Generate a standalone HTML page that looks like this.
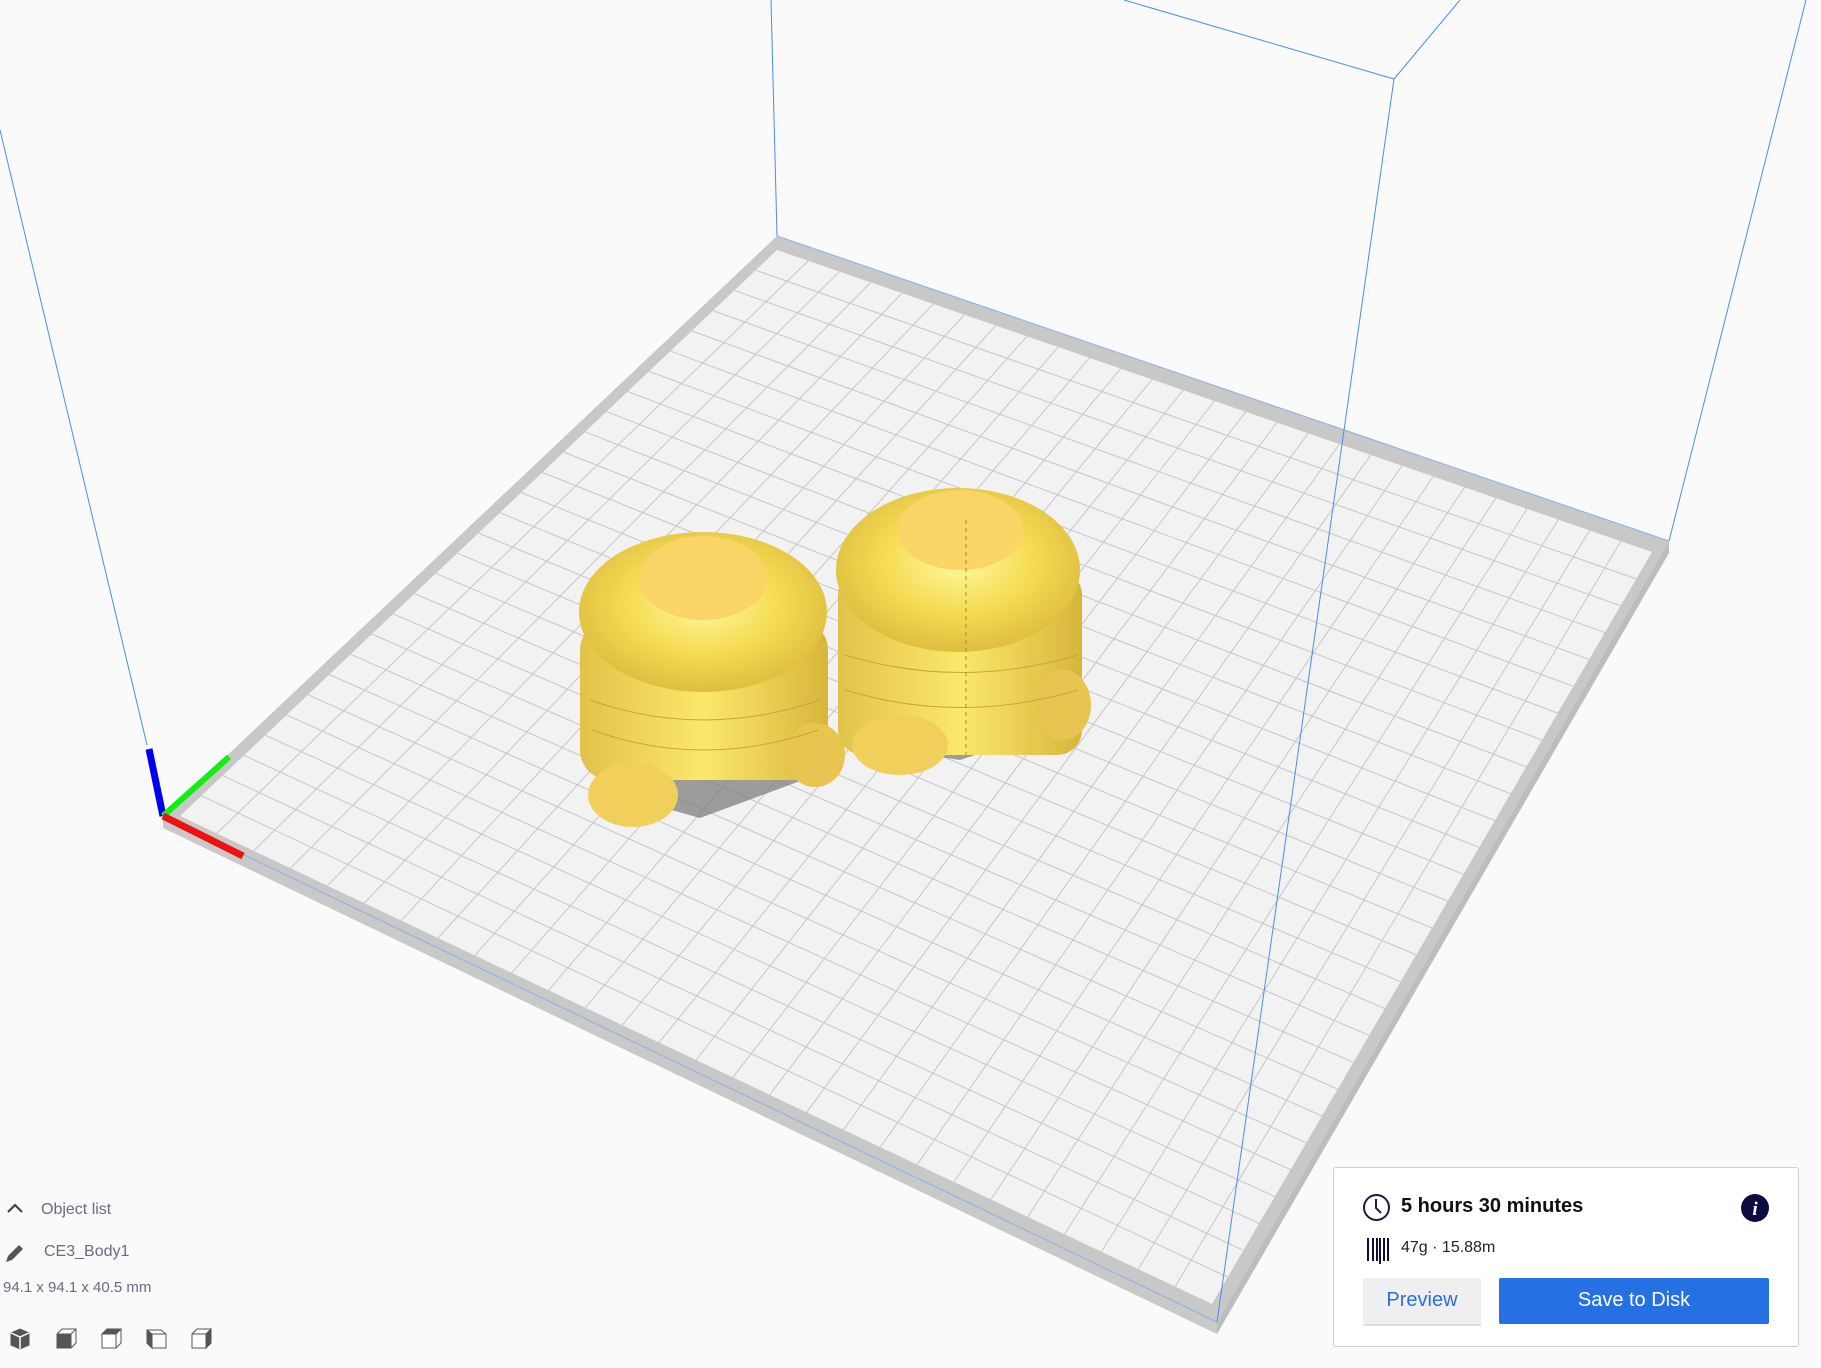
<!DOCTYPE html>
<html><head><meta charset="utf-8"><style>
html,body{margin:0;padding:0;width:1821px;height:1368px;background:#fafafa;overflow:hidden;font-family:"Liberation Sans","DejaVu Sans",sans-serif;}
svg.scene{position:absolute;left:0;top:0}
.panel{position:absolute;left:1333px;top:1167px;width:466px;height:180px;background:#fff;border:1px solid #cfcfcf;border-radius:3px;box-sizing:border-box}
.t{position:absolute;left:67px;top:27px;font-size:20px;font-weight:bold;color:#111}
.m{position:absolute;left:67px;top:71px;font-size:16px;color:#222}
.btn{position:absolute;top:110px;height:46px;line-height:44px;text-align:center;font-size:20px;border-radius:2px}
.lbl{position:absolute;font-size:16px;color:#6b6b80}
</style></head><body>
<svg class="scene" width="1821" height="1368" id="sc">
<g stroke="#4a8cf0" stroke-width="1" fill="none">
<line x1="771" y1="0" x2="777" y2="236"/>
<line x1="0" y1="130" x2="147" y2="745"/>
<line x1="1124" y1="0" x2="1394" y2="79"/>
<line x1="1460" y1="0" x2="1394" y2="79"/>
<line x1="1806" y1="0" x2="1669" y2="541"/>
</g>
<polygon points="163,816 1217,1322 1217,1334 163,828" fill="#c9c9c9"/>
<polygon points="1217,1322 1669,541 1669,553 1217,1334" fill="#bdbdbd"/>
<polygon points="777,236 1669,541 1217,1322 163,816" fill="#c8c8c8"/>
<polygon points="777,250 1652,552 1212,1304 180,816" fill="#f2f2f2" id="inner"/>
<g id="grid" stroke="#c6c6c6" stroke-width="1"></g>
<line x1="777" y1="236" x2="1669" y2="541" stroke="#8ab0ee" stroke-width="1"/>
<line x1="163" y1="816" x2="1217" y2="1322" stroke="#8ab0ee" stroke-width="1"/>
<line x1="1394" y1="79" x2="1217" y2="1322" stroke="#4a8cf0" stroke-width="1"/>
<defs>
<radialGradient id="y1" cx="0.5" cy="0.45" r="0.6"><stop offset="0" stop-color="#fff8a0"/><stop offset="0.5" stop-color="#f6dc55"/><stop offset="1" stop-color="#d9b83a"/></radialGradient>
<linearGradient id="y2" x1="0" x2="1"><stop offset="0" stop-color="#e2c24a"/><stop offset="0.5" stop-color="#fbe86a"/><stop offset="1" stop-color="#d8b53a"/></linearGradient>
</defs>
<polygon points="600,790 700,818 830,770 780,740" fill="#777" opacity="0.7"/>
<polygon points="860,745 960,760 1080,720 1000,700" fill="#777" opacity="0.7"/>
<g>
<rect x="580" y="620" width="248" height="160" rx="30" fill="url(#y2)"/>
<ellipse cx="703" cy="612" rx="124" ry="80" fill="url(#y1)"/>
<ellipse cx="703" cy="578" rx="64" ry="42" fill="#fad466"/>
<ellipse cx="633" cy="795" rx="45" ry="32" fill="#f0cf5a"/>
<ellipse cx="815" cy="755" rx="30" ry="32" fill="#e8c450"/>
<path d="M590 700 Q703 740 820 700 M592 730 Q703 770 818 730" stroke="#c9a538" fill="none"/>
</g>
<g>
<rect x="838" y="570" width="244" height="185" rx="25" fill="url(#y2)"/>
<ellipse cx="958" cy="570" rx="122" ry="82" fill="url(#y1)"/>
<ellipse cx="960" cy="530" rx="63" ry="40" fill="#fad466"/>
<ellipse cx="900" cy="745" rx="48" ry="30" fill="#f0cf5a"/>
<ellipse cx="1063" cy="705" rx="28" ry="35" fill="#e8c450"/>
<path d="M845 655 Q960 690 1078 655 M845 690 Q960 725 1078 690" stroke="#c9a538" fill="none"/>
<line x1="966" y1="520" x2="966" y2="760" stroke="#a88a30" stroke-dasharray="4 4"/>
</g>
<line x1="149" y1="749" x2="163" y2="816" stroke="#0000ee" stroke-width="7"/>
<line x1="163" y1="816" x2="229" y2="757" stroke="#11ee11" stroke-width="6"/>
<line x1="163" y1="816" x2="243" y2="856" stroke="#ee1111" stroke-width="7"/>
</svg>
<script>
(function(){
var B=[777,250],R=[1652,552],F=[1212,1304],L=[180,816];
var g=document.getElementById('grid'),n=28,s='';
function lp(a,b,t){return [a[0]+(b[0]-a[0])*t,a[1]+(b[1]-a[1])*t];}
for(var i=1;i<n;i++){var t=i/n;
var p=lp(L,B,t),q=lp(F,R,t);s+='<line x1="'+p[0]+'" y1="'+p[1]+'" x2="'+q[0]+'" y2="'+q[1]+'"/>';
p=lp(B,R,t);q=lp(L,F,t);s+='<line x1="'+p[0]+'" y1="'+p[1]+'" x2="'+q[0]+'" y2="'+q[1]+'"/>';}
g.innerHTML=s;})();
</script>
<svg style="position:absolute;left:6px;top:1202px" width="18" height="12"><path d="M2 10 L9 3 L16 10" stroke="#444" stroke-width="2.2" fill="none"/></svg>
<div class="lbl" style="left:41px;top:1201px">Object list</div>
<svg style="position:absolute;left:4px;top:1242px" width="22" height="22"><path d="M2 20 L4 14 L15 3 L19 7 L8 18 Z" fill="#555"/></svg>
<div class="lbl" style="left:44px;top:1243px">CE3_Body1</div>
<div class="lbl" style="left:3px;top:1279px;font-size:15px">94.1 x 94.1 x 40.5 mm</div>
<svg style="position:absolute;left:8px;top:1326px" width="220" height="26" fill="#555" stroke="#555">
<path d="M3 7 L12 3 L21 7 L21 19 L12 23 L3 19 Z"/><path d="M3 7 L12 11 L21 7 M12 11 V23" stroke="#fff" stroke-width="1.5" fill="none"/>
<g transform="translate(47,0)"><rect x="2" y="8" width="14" height="14"/><path d="M2 8 L7 3 H21 V17 L16 22 M16 8 L21 3" fill="none"/></g>
<g transform="translate(92,0)"><rect x="2" y="8" width="14" height="14" fill="#fff"/><path d="M2 8 L7 3 H21 L16 8 Z"/><path d="M21 3 V17 L16 22" fill="none"/></g>
<g transform="translate(137,0)"><path d="M2 4 L7 8 V22 L2 17 Z"/><path d="M7 8 H21 V22 H7 M2 4 H16 L21 8" fill="none"/></g>
<g transform="translate(182,0)"><rect x="2" y="8" width="14" height="14" fill="#fff"/><path d="M16 8 L21 3 V17 L16 22 Z"/><path d="M2 8 L7 3 H21" fill="none"/></g>
</svg>
<div class="panel">
<svg style="position:absolute;left:28px;top:25px" width="30" height="30"><circle cx="14.5" cy="14.5" r="12.5" stroke="#1a1a44" stroke-width="2" fill="none"/><path d="M14 6 V15 L19 20" stroke="#1a1a44" stroke-width="2" fill="none"/></svg>
<div class="t">5 hours 30 minutes</div>
<svg style="position:absolute;left:406px;top:25px" width="30" height="30"><circle cx="15" cy="15" r="14" fill="#0c0c40"/><text x="15" y="22" text-anchor="middle" fill="#fff" font-size="19" font-weight="bold" font-style="italic" font-family="Liberation Serif,serif">i</text></svg>
<svg style="position:absolute;left:32px;top:69px" width="26" height="28" stroke="#0c0c40"><path d="M2 1V24 M7 1V24 M11 1V24 M14 1V27 M18 1V24 M22 1V24" stroke-width="2"/></svg>
<div class="m">47g · 15.88m</div>
<div class="btn" style="left:29px;width:118px;background:#efefef;color:#2a6fe0;border-bottom:2px solid #ddd">Preview</div>
<div class="btn" style="left:165px;width:270px;background:#2570e2;color:#fff">Save to Disk</div>
</div>
</body></html>
